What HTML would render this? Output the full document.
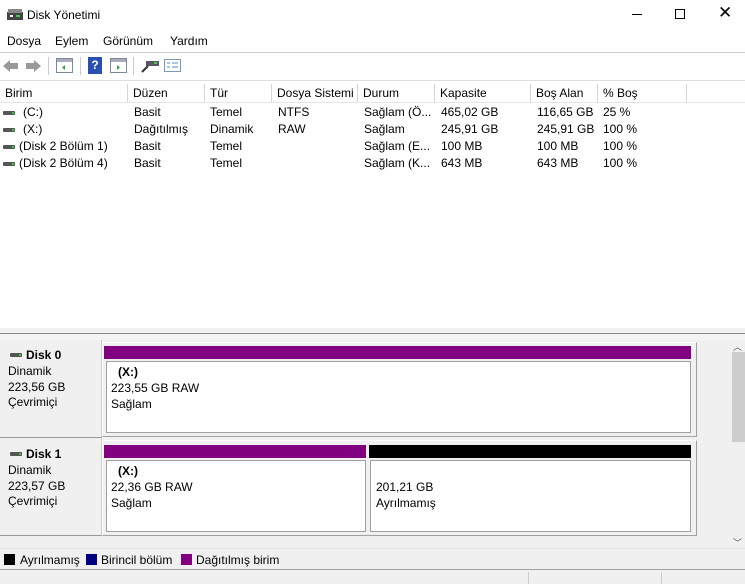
<!DOCTYPE html>
<html><head><meta charset="utf-8"><style>
*{margin:0;padding:0;box-sizing:border-box}
body{width:745px;height:584px;overflow:hidden;background:#fff;font-family:"Liberation Sans",sans-serif;font-size:12px;color:#000;position:relative}
.a{position:absolute;white-space:nowrap}
.hd{position:absolute;top:84px;height:18px;border-right:1px solid #d5d5d5;padding-left:5px;line-height:18px;background:#fff}
.row span{position:absolute}
.drv{position:absolute;width:12px;height:4px;background:#555;border-radius:1px}
.drv:after{content:"";position:absolute;right:1px;top:1px;width:2px;height:2px;background:#3c3}
</style></head><body>
<!-- title -->
<svg class="a" style="left:7px;top:9px" width="16" height="12"><rect x="0" y="3" width="16" height="8" fill="#444"/><rect x="1" y="0" width="14" height="4" fill="#888"/><rect x="3" y="6" width="3" height="2" fill="#fff"/><rect x="9" y="6" width="4" height="2" fill="#4c4"/></svg>
<div class="a" style="left:27px;top:8px;font-size:12px">Disk Yönetimi</div>
<div class="a" style="left:632px;top:14px;width:10px;height:1px;background:#000"></div>
<div class="a" style="left:675px;top:9px;width:10px;height:10px;border:1px solid #000"></div>
<div class="a" style="left:718px;top:3px;font-size:17px;font-weight:300">✕</div>
<!-- menu -->
<div class="a" style="left:7px;top:34px">Dosya</div>
<div class="a" style="left:55px;top:34px">Eylem</div>
<div class="a" style="left:103px;top:34px">Görünüm</div>
<div class="a" style="left:170px;top:34px">Yardım</div>
<div class="a" style="left:0;top:52px;width:745px;height:1px;background:#ccc"></div>
<!-- toolbar -->
<svg class="a" style="left:2px;top:58px" width="40" height="16"><path d="M1 8 L8 2 V5 H16 V11 H8 V14 Z" fill="#999"/><path d="M39 8 L32 2 V5 H24 V11 H32 V14 Z" fill="#999"/></svg>
<div class="a" style="left:48px;top:57px;width:1px;height:18px;background:#ccc"></div>
<svg class="a" style="left:56px;top:58px" width="17" height="15"><rect x=".5" y=".5" width="16" height="14" fill="#fff" stroke="#7a8a9a"/><rect x="1" y="1" width="15" height="3" fill="#aab"/><path d="M9 7 L6 9.5 L9 12Z" fill="#3a3"/></svg>
<div class="a" style="left:80px;top:57px;width:1px;height:18px;background:#ccc"></div>
<div class="a" style="left:88px;top:57px;width:14px;height:17px;background:#2a4fb0;color:#fff;font-weight:bold;text-align:center;line-height:17px">?</div>
<svg class="a" style="left:110px;top:58px" width="17" height="15"><rect x=".5" y=".5" width="16" height="14" fill="#fff" stroke="#7a8a9a"/><rect x="1" y="1" width="15" height="3" fill="#aab"/><path d="M7 7 L10 9.5 L7 12Z" fill="#3a3"/></svg>
<div class="a" style="left:133px;top:57px;width:1px;height:18px;background:#ccc"></div>
<svg class="a" style="left:140px;top:59px" width="20" height="14"><rect x="6" y="2" width="13" height="5" fill="#556"/><rect x="14" y="3" width="3" height="2" fill="#4c4"/><path d="M8 7 L2 13" stroke="#333" stroke-width="2"/></svg>
<svg class="a" style="left:164px;top:59px" width="17" height="13"><rect x=".5" y=".5" width="16" height="12" fill="#fff" stroke="#7a9ab8"/><path d="M3 4h3M3 8h3M8 4h6M8 8h6" stroke="#5a8ac8"/></svg>
<div class="a" style="left:0;top:80px;width:745px;height:1px;background:#ddd"></div>
<!-- header -->
<div class="hd" style="left:0;width:128px">Birim</div>
<div class="hd" style="left:128px;width:77px">Düzen</div>
<div class="hd" style="left:205px;width:67px">Tür</div>
<div class="hd" style="left:272px;width:86px">Dosya Sistemi</div>
<div class="hd" style="left:358px;width:77px">Durum</div>
<div class="hd" style="left:435px;width:96px">Kapasite</div>
<div class="hd" style="left:531px;width:67px">Boş Alan</div>
<div class="hd" style="left:598px;width:89px">% Boş</div>
<div class="a" style="left:0;top:102px;width:745px;height:1px;background:#e5e5e5"></div>
<!-- rows -->
<div class="row">
<div class="drv" style="left:3px;top:111px"></div><span style="left:23px;top:105px">(C:)</span><span style="left:134px;top:105px">Basit</span><span style="left:210px;top:105px">Temel</span><span style="left:278px;top:105px">NTFS</span><span style="left:364px;top:105px">Sağlam (Ö...</span><span style="left:441px;top:105px">465,02 GB</span><span style="left:537px;top:105px">116,65 GB</span><span style="left:603px;top:105px">25 %</span>
<div class="drv" style="left:3px;top:128px"></div><span style="left:23px;top:122px">(X:)</span><span style="left:134px;top:122px">Dağıtılmış</span><span style="left:210px;top:122px">Dinamik</span><span style="left:278px;top:122px">RAW</span><span style="left:364px;top:122px">Sağlam</span><span style="left:441px;top:122px">245,91 GB</span><span style="left:537px;top:122px">245,91 GB</span><span style="left:603px;top:122px">100 %</span>
<div class="drv" style="left:3px;top:145px"></div><span style="left:19px;top:139px">(Disk 2 Bölüm 1)</span><span style="left:134px;top:139px">Basit</span><span style="left:210px;top:139px">Temel</span><span style="left:364px;top:139px">Sağlam (E...</span><span style="left:441px;top:139px">100 MB</span><span style="left:537px;top:139px">100 MB</span><span style="left:603px;top:139px">100 %</span>
<div class="drv" style="left:3px;top:162px"></div><span style="left:19px;top:156px">(Disk 2 Bölüm 4)</span><span style="left:134px;top:156px">Basit</span><span style="left:210px;top:156px">Temel</span><span style="left:364px;top:156px">Sağlam (K...</span><span style="left:441px;top:156px">643 MB</span><span style="left:537px;top:156px">643 MB</span><span style="left:603px;top:156px">100 %</span>
</div>
<!-- lower -->
<div class="a" style="left:0;top:328px;width:745px;height:256px;background:#f0f0f0"></div>
<div class="a" style="left:0;top:333px;width:745px;height:1px;background:#888"></div>
<div class="a" style="left:0;top:334px;width:745px;height:6px;background:#f4f4f4"></div>
<!-- disk0 -->
<div class="a" style="left:0;top:340px;width:102px;height:98px;border-right:1px solid #ccc;border-bottom:1px solid #999"></div>
<div class="drv" style="left:10px;top:353px"></div>
<div class="a" style="left:26px;top:348px;font-weight:bold">Disk 0</div>
<div class="a" style="left:8px;top:364px;line-height:15.5px">Dinamik<br>223,56 GB<br>Çevrimiçi</div>
<div class="a" style="left:102px;top:342px;width:595px;height:95px;border:1px solid #a0a0a0;border-top-color:#fff;border-left-color:#fff"></div>
<div class="a" style="left:104px;top:346px;width:587px;height:13px;background:#800080"></div>
<div class="a" style="left:106px;top:361px;width:585px;height:72px;background:#fff;border:1px solid #a0a0a0"></div>
<div class="a" style="left:118px;top:365px;font-weight:bold">(X:)</div>
<div class="a" style="left:111px;top:380px;line-height:16px">223,55 GB RAW<br>Sağlam</div>
<!-- disk1 -->
<div class="a" style="left:0;top:438px;width:102px;height:98px;border-right:1px solid #ccc;border-bottom:1px solid #999"></div>
<div class="drv" style="left:10px;top:452px"></div>
<div class="a" style="left:26px;top:447px;font-weight:bold">Disk 1</div>
<div class="a" style="left:8px;top:463px;line-height:15.5px">Dinamik<br>223,57 GB<br>Çevrimiçi</div>
<div class="a" style="left:102px;top:440px;width:595px;height:96px;border:1px solid #a0a0a0;border-top-color:#fff;border-left-color:#fff"></div>
<div class="a" style="left:104px;top:445px;width:262px;height:13px;background:#800080"></div>
<div class="a" style="left:369px;top:445px;width:322px;height:13px;background:#000"></div>
<div class="a" style="left:106px;top:460px;width:260px;height:72px;background:#fff;border:1px solid #a0a0a0"></div>
<div class="a" style="left:370px;top:460px;width:321px;height:72px;background:#fff;border:1px solid #a0a0a0"></div>
<div class="a" style="left:118px;top:464px;font-weight:bold">(X:)</div>
<div class="a" style="left:111px;top:479px;line-height:16px">22,36 GB RAW<br>Sağlam</div>
<div class="a" style="left:376px;top:479px;line-height:16px">201,21 GB<br>Ayrılmamış</div>
<!-- scrollbar -->
<div class="a" style="left:730px;top:340px;width:15px;height:208px;background:#f0f0f0"></div>
<div class="a" style="left:732px;top:352px;width:13px;height:90px;background:#cdcdcd"></div>
<div class="a" style="left:733px;top:340px;font-size:9px;color:#555">︿</div>
<div class="a" style="left:733px;top:536px;font-size:9px;color:#555">﹀</div>
<div class="a" style="left:0;top:548px;width:745px;height:1px;background:#e0e0e0"></div>
<!-- legend -->
<div class="a" style="left:4px;top:554px;width:11px;height:11px;background:#000"></div>
<div class="a" style="left:20px;top:553px">Ayrılmamış</div>
<div class="a" style="left:86px;top:554px;width:11px;height:11px;background:#000080"></div>
<div class="a" style="left:101px;top:553px">Birincil bölüm</div>
<div class="a" style="left:181px;top:554px;width:11px;height:11px;background:#800080"></div>
<div class="a" style="left:196px;top:553px">Dağıtılmış birim</div>
<div class="a" style="left:0;top:569px;width:745px;height:1px;background:#a0a0a0"></div>
<div class="a" style="left:0;top:570px;width:745px;height:14px;background:#f0f0f0"></div>
<div class="a" style="left:528px;top:572px;width:1px;height:12px;background:#ccc"></div>
<div class="a" style="left:661px;top:572px;width:1px;height:12px;background:#ccc"></div>
</body></html>
